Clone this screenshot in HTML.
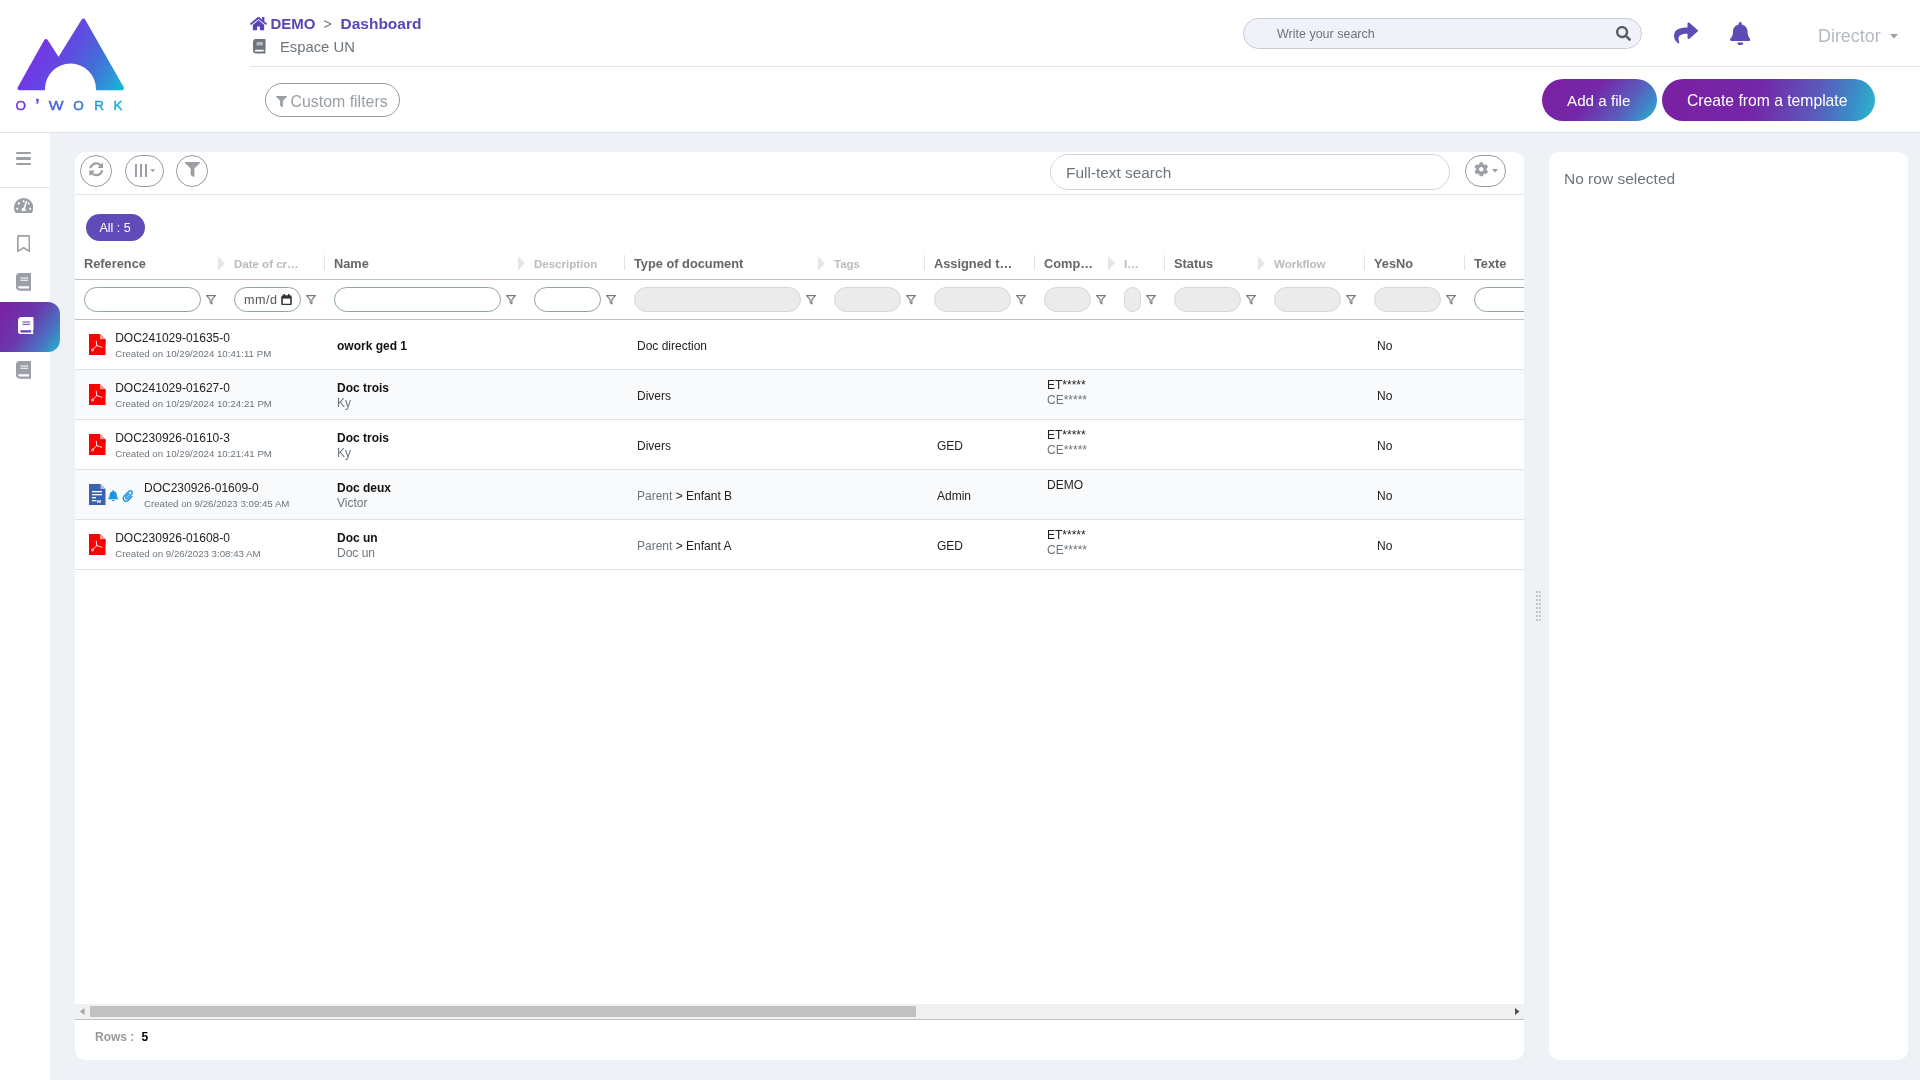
<!DOCTYPE html><html><head><meta charset="utf-8"><style>
html,body{margin:0;padding:0;}
body{width:1920px;height:1080px;overflow:hidden;position:relative;background:#eef1f6;font-family:"Liberation Sans", sans-serif;}
.t{position:absolute;white-space:nowrap;}
#root{position:absolute;left:0;top:0;width:1920px;height:1080px;will-change:transform;}
svg{display:block}
</style></head><body><div id="root">
<div style="position:absolute;left:0px;top:0px;width:1920px;height:132px;background:#fff"></div>
<div style="position:absolute;left:0px;top:132px;width:1920px;height:1px;background:#dfe3e8"></div>
<svg style="position:absolute;left:0;top:0" width="140" height="120" viewBox="0 0 140 120">
<defs><linearGradient id="lg" gradientUnits="userSpaceOnUse" x1="30" y1="35" x2="125" y2="92">
<stop offset="0" stop-color="#7d2ae8"/><stop offset="0.4" stop-color="#5f4de0"/><stop offset="0.65" stop-color="#4270d8"/><stop offset="0.85" stop-color="#2a9ad8"/><stop offset="1" stop-color="#05c4ce"/></linearGradient>
<linearGradient id="lg2" gradientUnits="userSpaceOnUse" x1="15" y1="0" x2="125" y2="0">
<stop offset="0" stop-color="#7a35e0"/><stop offset="0.5" stop-color="#3d6fd8"/><stop offset="1" stop-color="#18bcd0"/></linearGradient></defs>
<path d="M19.5 88.2 L46 41 L58.6 60.5 L83.4 20.5 L122 88.2 Z" fill="url(#lg)" stroke="url(#lg)" stroke-width="4" stroke-linejoin="round"/>
<path d="M45 91 L45 89 A25.5 25.5 0 0 1 96 89 L96 91 Z" fill="#fff"/>
<g font-family="Liberation Sans" font-weight="400" font-size="13.5" fill="url(#lg2)" stroke="url(#lg2)" stroke-width="0.45">
<text x="15.5" y="109.6">O</text><text x="35.2" y="109.1" font-weight="700" font-size="15">’</text><text x="48.8" y="109.6" textLength="14.8" lengthAdjust="spacingAndGlyphs">W</text><text x="73.2" y="109.6">O</text><text x="94.2" y="109.6">R</text><text x="113.6" y="109.6">K</text></g>
</svg>
<svg style="position:absolute;left:250px;top:16px;" width="17" height="15.1" viewBox="0 0 576 512"><path fill="#5b44b8" d="M280.37 148.26L96 300.11V464a16 16 0 0 0 16 16l112.06-.29a16 16 0 0 0 15.92-16V368a16 16 0 0 1 16-16h64a16 16 0 0 1 16 16v95.64a16 16 0 0 0 16 16.05L464 480a16 16 0 0 0 16-16V300L295.67 148.26a12.190 12.190 0 0 0-15.3 0zM571.6 251.47L488 182.56V44.05a12 12 0 0 0-12-12h-56a12 12 0 0 0-12 12v72.61L318.47 43a48 48 0 0 0-61 0L4.34 251.47a12 12 0 0 0-1.6 16.9l25.5 31A12 12 0 0 0 45.15 301l235.22-193.74a12.190 12.190 0 0 1 15.3 0L530.9 301a12 12 0 0 0 16.9-1.6l25.5-31a12 12 0 0 0-1.700-16.930z"/></svg>
<div class="t" style="left:270.5px;top:16.10px;font-size:15px;line-height:15px;color:#5b44b8;font-weight:700;">DEMO</div>
<div class="t" style="left:323.5px;top:16.65px;font-size:14px;line-height:14px;color:#6c757d;font-weight:400;">&gt;</div>
<div class="t" style="left:340.5px;top:15.68px;font-size:15.5px;line-height:15.5px;color:#5b44b8;font-weight:700;">Dashboard</div>
<svg style="position:absolute;left:253px;top:39.2px;" width="12.6" height="14.4" viewBox="0 0 448 512"><path fill="#6c757d" d="M448 360V24c0-13.3-10.7-24-24-24H96C43 0 0 43 0 96v320c0 53 43 96 96 96h328c13.3 0 24-10.7 24-24v-16c0-7.5-3.5-14.3-8.9-18.7-4.200-15.400-4.200-59.300 0-74.700 5.400-4.300 8.900-11.100 8.900-18.600zM128 134c0-3.300 2.700-6 6-6h212c3.300 0 6 2.700 6 6v20c0 3.300-2.700 6-6 6H134c-3.300 0-6-2.700-6-6v-20zm0 64c0-3.300 2.700-6 6-6h212c3.300 0 6 2.700 6 6v20c0 3.300-2.700 6-6 6H134c-3.300 0-6-2.700-6-6v-20zm253.400 250H96c-17.700 0-32-14.300-32-32 0-17.600 14.400-32 32-32h285.400c-1.900 17.100-1.900 46.900 0 64z"/></svg>
<div class="t" style="left:280.0px;top:39.87px;font-size:14.8px;line-height:14.8px;color:#6c757d;font-weight:400;">Espace UN</div>
<div style="position:absolute;left:250px;top:66px;width:1670px;height:1px;background:#dfe3e8"></div>
<div style="position:absolute;left:1243px;top:18px;width:397px;height:29px;background:#f1f1f9;border:1px solid #c9ced6;border-radius:16px"></div>
<div class="t" style="left:1277.0px;top:27.82px;font-size:12.5px;line-height:12.5px;color:#6c757d;font-weight:400;">Write your search</div>
<svg style="position:absolute;left:1616px;top:26px;" width="15" height="15" viewBox="0 0 512 512"><path fill="#555d66" d="M505 442.7L405.3 343c-4.5-4.5-10.6-7-17-7H372c27.6-35.3 44-79.7 44-128C416 93.1 322.9 0 208 0S0 93.1 0 208s93.1 208 208 208c48.3 0 92.7-16.4 128-44v16.3c0 6.4 2.5 12.5 7 17l99.7 99.7c9.4 9.4 24.6 9.4 33.9 0l28.3-28.3c9.4-9.4 9.4-24.6.1-34zM208 336c-70.7 0-128-57.2-128-128 0-70.7 57.2-128 128-128 70.7 0 128 57.2 128 128 0 70.7-57.2 128-128 128z"/></svg>
<svg style="position:absolute;left:1674px;top:21px;" width="24" height="24" viewBox="0 0 512 512"><path fill="#5b4db5" d="M503.691 189.836L327.687 37.851C312.281 24.546 288 35.347 288 56.015v80.053C127.371 137.907 0 170.1 0 322.326c0 61.441 39.581 122.309 83.333 154.132 13.653 9.931 33.111-2.533 28.077-18.631C66.066 312.814 132.917 274.316 288 272.085V360c0 20.7 24.3 31.453 39.687 18.164l176.004-152c11.071-9.562 11.086-26.753 0-36.328z"/></svg>
<svg style="position:absolute;left:1729.6px;top:21.5px;" width="20.5" height="23.5" viewBox="0 0 448 512"><path fill="#5b4db5" d="M224 512c35.32 0 63.970-28.650 63.970-64H160.030c0 35.350 28.650 64 63.970 64zm215.390-149.710c-19.320-20.760-55.470-51.990-55.470-154.290 0-77.700-54.480-139.900-127.940-155.160V32c0-17.670-14.320-32-31.980-32s-31.980 14.330-31.980 32v20.840C118.560 68.100 64.080 130.300 64.080 208c0 102.300-36.150 133.530-55.470 154.290-6 6.450-8.660 14.160-8.610 21.710.110 16.400 12.980 32 32.100 32h383.800c19.120 0 32-15.600 32.100-32 .050-7.550-2.610-15.270-8.610-21.710z"/></svg>
<div class="t" style="left:1818.0px;top:27.85px;font-size:17.9px;line-height:17.9px;color:#b4bac0;font-weight:400;">Director</div>
<svg style="position:absolute;left:1890px;top:34px;" width="8" height="5" viewBox="0 0 8 5"><path d="M0 0H8L4 4.5Z" fill="#9aa0a6"/></svg>
<div style="position:absolute;left:265px;top:83px;width:133px;height:32px;border:1px solid #9a9a9a;border-radius:17px"></div>
<svg style="position:absolute;left:276px;top:96px;" width="11" height="11" viewBox="0 0 512 512"><path fill="#9aa0a6" d="M487.976 0H24.028C2.710 0-8.047 25.866 7.058 40.971L192 225.941V432c0 7.831 3.821 15.170 10.237 19.662l80 55.980C298.020 518.690 320 507.493 320 487.980V225.941l184.947-184.970C520.021 25.896 509.338 0 487.976 0z"/></svg>
<div class="t" style="left:290.5px;top:93.54px;font-size:15.9px;line-height:15.9px;color:#9aa0a6;font-weight:400;">Custom filters</div>
<div style="position:absolute;left:1542px;top:79px;width:115px;height:42px;border-radius:21px;background:linear-gradient(128deg,#7b1fa2 0%,#7427a8 42%,#5a5bbb 70%,#3b8cc8 87%,#26bccc 100%)"></div>
<div class="t" style="left:1567.0px;top:93.13px;font-size:15.2px;line-height:15.2px;color:#fff;font-weight:400;">Add a file</div>
<div style="position:absolute;left:1662px;top:79px;width:213px;height:42px;border-radius:21px;background:linear-gradient(105deg,#7b1fa2 0%,#7427a8 45%,#5a5bbb 72%,#3b8cc8 88%,#26bccc 100%)"></div>
<div class="t" style="left:1687.0px;top:92.71px;font-size:15.7px;line-height:15.7px;color:#fff;font-weight:400;">Create from a template</div>
<div style="position:absolute;left:0px;top:133px;width:50px;height:947px;background:#fff"></div>
<div style="position:absolute;left:16.1px;top:151.9px;width:15.3px;height:2.2px;background:#9aa0a6;border-radius:1.1px"></div>
<div style="position:absolute;left:16.1px;top:157.4px;width:15.3px;height:2.2px;background:#9aa0a6;border-radius:1.1px"></div>
<div style="position:absolute;left:16.1px;top:162.8px;width:15.3px;height:2.2px;background:#9aa0a6;border-radius:1.1px"></div>
<div style="position:absolute;left:0px;top:187px;width:50px;height:1px;background:#dfe3e8"></div>
<svg style="position:absolute;left:14px;top:196.9px;" width="19.4" height="17.2" viewBox="0 0 576 512"><path fill="#9aa0a6" d="M288 32C128.94 32 0 160.94 0 320c0 52.8 14.25 102.26 39.06 144.8 5.61 9.62 16.3 15.2 27.44 15.2h443c11.14 0 21.83-5.58 27.44-15.2C561.75 422.26 576 372.8 576 320c0-159.06-128.94-288-288-288zm0 64c14.71 0 26.58 10.13 30.32 23.65-1.11 2.26-2.64 4.23-3.45 6.67l-9.22 27.67c-5.13 3.49-10.97 6.01-17.64 6.010-17.670 0-32-14.330-32-32S270.330 96 288 96zM96 384c-17.670 0-32-14.330-32-32s14.330-32 32-32 32 14.330 32 32-14.330 32-32 32zm48-160c-17.670 0-32-14.330-32-32s14.330-32 32-32 32 14.330 32 32-14.330 32-32 32zm246.770-72.410l-61.330 184C343.130 347.330 352 364.540 352 384c0 11.720-3.380 22.550-8.880 32H232.880c-5.500-9.450-8.880-20.280-8.880-32 0-33.940 26.500-61.430 59.900-63.590l61.340-184.010c4.170-12.560 17.730-19.450 30.360-15.170 12.570 4.190 19.350 17.790 15.170 30.360zm14.660 57.200l15.520-46.550c3.470-1.290 7.130-2.230 11.050-2.230 17.670 0 32 14.330 32 32s-14.330 32-32 32c-11.380-.010-20.890-6.270-26.570-15.220zM480 384c-17.670 0-32-14.330-32-32s14.330-32 32-32 32 14.330 32 32-14.330 32-32 32z"/></svg>
<svg style="position:absolute;left:17px;top:235.4px;" width="13.2" height="17.6" viewBox="0 0 384 512"><path fill="#9aa0a6" d="M336 0H48C21.49 0 0 21.49 0 48v464l192-112 192 112V48c0-26.51-21.49-48-48-48zm0 428.43l-144-84-144 84V54a6 6 0 0 1 6-6h276c3.314 0 6 2.683 6 5.996V428.43z"/></svg>
<svg style="position:absolute;left:15.8px;top:273.3px;" width="15.5" height="17.7" viewBox="0 0 448 512"><path fill="#9aa0a6" d="M448 360V24c0-13.3-10.7-24-24-24H96C43 0 0 43 0 96v320c0 53 43 96 96 96h328c13.3 0 24-10.7 24-24v-16c0-7.5-3.5-14.3-8.9-18.7-4.200-15.400-4.200-59.300 0-74.700 5.400-4.300 8.900-11.100 8.900-18.600zM128 134c0-3.300 2.700-6 6-6h212c3.300 0 6 2.700 6 6v20c0 3.300-2.700 6-6 6H134c-3.300 0-6-2.700-6-6v-20zm0 64c0-3.300 2.700-6 6-6h212c3.300 0 6 2.700 6 6v20c0 3.300-2.700 6-6 6H134c-3.300 0-6-2.700-6-6v-20zm253.400 250H96c-17.700 0-32-14.300-32-32 0-17.600 14.400-32 32-32h285.400c-1.900 17.100-1.900 46.900 0 64z"/></svg>
<div style="position:absolute;left:0px;top:302px;width:60px;height:50px;border-radius:0 12px 12px 0;background:linear-gradient(125deg,#7b1fa2 0%,#6b38ad 45%,#4a72c2 75%,#22b9cf 100%)"></div>
<svg style="position:absolute;left:18px;top:316.5px;" width="15.5" height="17.7" viewBox="0 0 448 512"><path fill="#fff" d="M448 360V24c0-13.3-10.7-24-24-24H96C43 0 0 43 0 96v320c0 53 43 96 96 96h328c13.3 0 24-10.7 24-24v-16c0-7.5-3.5-14.3-8.9-18.7-4.200-15.400-4.200-59.300 0-74.700 5.400-4.300 8.900-11.100 8.900-18.600zM128 134c0-3.300 2.700-6 6-6h212c3.300 0 6 2.700 6 6v20c0 3.300-2.700 6-6 6H134c-3.300 0-6-2.700-6-6v-20zm0 64c0-3.300 2.700-6 6-6h212c3.300 0 6 2.700 6 6v20c0 3.300-2.700 6-6 6H134c-3.300 0-6-2.700-6-6v-20zm253.400 250H96c-17.700 0-32-14.300-32-32 0-17.600 14.400-32 32-32h285.400c-1.900 17.100-1.900 46.900 0 64z"/></svg>
<svg style="position:absolute;left:15.8px;top:361.3px;" width="15.5" height="17.7" viewBox="0 0 448 512"><path fill="#9aa0a6" d="M448 360V24c0-13.3-10.7-24-24-24H96C43 0 0 43 0 96v320c0 53 43 96 96 96h328c13.3 0 24-10.7 24-24v-16c0-7.5-3.5-14.3-8.9-18.7-4.200-15.400-4.200-59.300 0-74.700 5.400-4.300 8.900-11.100 8.900-18.600zM128 134c0-3.300 2.700-6 6-6h212c3.300 0 6 2.700 6 6v20c0 3.300-2.700 6-6 6H134c-3.300 0-6-2.700-6-6v-20zm0 64c0-3.300 2.700-6 6-6h212c3.300 0 6 2.700 6 6v20c0 3.300-2.700 6-6 6H134c-3.300 0-6-2.700-6-6v-20zm253.400 250H96c-17.700 0-32-14.300-32-32 0-17.600 14.400-32 32-32h285.400c-1.900 17.100-1.900 46.900 0 64z"/></svg>
<div style="position:absolute;left:75px;top:152px;width:1449px;height:908px;background:#fff;border-radius:10px"></div>
<div style="position:absolute;left:1549px;top:152px;width:359px;height:908px;background:#fff;border-radius:10px"></div>
<div style="position:absolute;left:1536px;top:591px;width:2px;height:2px;background:#c4c4c4"></div>
<div style="position:absolute;left:1536px;top:595px;width:2px;height:2px;background:#c4c4c4"></div>
<div style="position:absolute;left:1536px;top:599px;width:2px;height:2px;background:#c4c4c4"></div>
<div style="position:absolute;left:1536px;top:603px;width:2px;height:2px;background:#c4c4c4"></div>
<div style="position:absolute;left:1536px;top:607px;width:2px;height:2px;background:#c4c4c4"></div>
<div style="position:absolute;left:1536px;top:611px;width:2px;height:2px;background:#c4c4c4"></div>
<div style="position:absolute;left:1536px;top:615px;width:2px;height:2px;background:#c4c4c4"></div>
<div style="position:absolute;left:1536px;top:619px;width:2px;height:2px;background:#c4c4c4"></div>
<div style="position:absolute;left:1539px;top:591px;width:2px;height:2px;background:#c4c4c4"></div>
<div style="position:absolute;left:1539px;top:595px;width:2px;height:2px;background:#c4c4c4"></div>
<div style="position:absolute;left:1539px;top:599px;width:2px;height:2px;background:#c4c4c4"></div>
<div style="position:absolute;left:1539px;top:603px;width:2px;height:2px;background:#c4c4c4"></div>
<div style="position:absolute;left:1539px;top:607px;width:2px;height:2px;background:#c4c4c4"></div>
<div style="position:absolute;left:1539px;top:611px;width:2px;height:2px;background:#c4c4c4"></div>
<div style="position:absolute;left:1539px;top:615px;width:2px;height:2px;background:#c4c4c4"></div>
<div style="position:absolute;left:1539px;top:619px;width:2px;height:2px;background:#c4c4c4"></div>
<div class="t" style="left:1564.0px;top:170.63px;font-size:15.5px;line-height:15.5px;color:#6c757d;font-weight:400;">No row selected</div>
<div style="position:absolute;left:80px;top:155px;width:30px;height:30px;border:1px solid #9a9a9a;border-radius:50%"></div>
<svg style="position:absolute;left:88.5px;top:162px;" width="14.5" height="14.5" viewBox="0 0 512 512"><path fill="#9aa0a6" d="M370.72 133.28C339.458 104.008 298.888 87.962 255.848 88c-77.458.068-144.328 53.178-162.791 126.85-1.344 5.363-6.122 9.15-11.651 9.15H24.103c-7.498 0-13.194-6.807-11.807-14.176C33.933 94.924 134.813 8 256 8c66.448 0 126.791 26.136 171.315 68.685L463.03 40.97C478.149 25.851 504 36.559 504 57.941V192c0 13.255-10.745 24-24 24H345.941c-21.382 0-32.09-25.851-16.971-40.971l41.75-41.749zM32 296h134.059c21.382 0 32.09 25.851 16.971 40.971l-41.75 41.75c31.262 29.273 71.835 45.319 114.876 45.28 77.418-.07 144.315-53.144 162.787-126.849 1.344-5.363 6.122-9.15 11.651-9.15h57.304c7.498 0 13.194 6.807 11.807 14.176C478.067 417.076 377.187 504 256 504c-66.448 0-126.791-26.136-171.315-68.685L48.97 471.03C33.851 486.149 8 475.441 8 454.059V320c0-13.255 10.745-24 24-24z"/></svg>
<div style="position:absolute;left:125px;top:155px;width:37px;height:30px;border:1px solid #9a9a9a;border-radius:16px"></div>
<div style="position:absolute;left:135px;top:164px;width:1.6px;height:13px;background:#9aa0a6"></div>
<div style="position:absolute;left:140px;top:164px;width:1.6px;height:13px;background:#9aa0a6"></div>
<div style="position:absolute;left:145px;top:164px;width:1.6px;height:13px;background:#9aa0a6"></div>
<svg style="position:absolute;left:149.5px;top:169.3px;" width="5.5" height="3" viewBox="0 0 6 3"><path d="M0 0H6L3 3Z" fill="#9aa0a6"/></svg>
<div style="position:absolute;left:176px;top:155px;width:30px;height:30px;border:1px solid #9a9a9a;border-radius:50%"></div>
<svg style="position:absolute;left:185.3px;top:162px;" width="15" height="15" viewBox="0 0 512 512"><path fill="#9aa0a6" d="M487.976 0H24.028C2.710 0-8.047 25.866 7.058 40.971L192 225.941V432c0 7.831 3.821 15.170 10.237 19.662l80 55.980C298.020 518.690 320 507.493 320 487.980V225.941l184.947-184.970C520.021 25.896 509.338 0 487.976 0z"/></svg>
<div style="position:absolute;left:1050px;top:154px;width:398px;height:34px;border:1px solid #ced4da;border-radius:18px"></div>
<div class="t" style="left:1066.0px;top:165.16px;font-size:15.4px;line-height:15.4px;color:#6c757d;font-weight:400;">Full-text search</div>
<div style="position:absolute;left:1465px;top:155px;width:39px;height:30px;border:1px solid #9a9a9a;border-radius:16px"></div>
<svg style="position:absolute;left:1474px;top:162px;" width="14.5" height="14.5" viewBox="0 0 512 512"><path fill="#9aa0a6" d="M487.4 315.7l-42.6-24.6c4.3-23.2 4.3-47 0-70.2l42.6-24.6c4.9-2.8 7.1-8.6 5.5-14-11.1-35.6-30-67.8-54.7-94.6-3.8-4.1-10-5.1-14.8-2.3L380.8 110c-17.9-15.4-38.5-27.3-60.8-35.1V25.8c0-5.6-3.9-10.5-9.4-11.7-36.7-8.2-74.3-7.8-109.2 0-5.5 1.2-9.4 6.1-9.4 11.7V75c-22.2 7.9-42.8 19.8-60.8 35.1L88.7 85.5c-4.9-2.8-11-1.9-14.8 2.3-24.7 26.7-43.6 58.9-54.7 94.6-1.7 5.4.6 11.2 5.5 14L67.3 221c-4.3 23.2-4.3 47 0 70.2l-42.6 24.6c-4.9 2.8-7.1 8.6-5.5 14 11.1 35.6 30 67.8 54.7 94.6 3.8 4.1 10 5.1 14.8 2.3l42.6-24.6c17.9 15.4 38.5 27.3 60.8 35.1v49.2c0 5.6 3.9 10.5 9.4 11.7 36.7 8.2 74.3 7.8 109.2 0 5.5-1.2 9.4-6.1 9.4-11.7v-49.2c22.2-7.9 42.8-19.8 60.8-35.1l42.6 24.6c4.9 2.8 11 1.9 14.8-2.3 24.7-26.7 43.6-58.9 54.7-94.6 1.5-5.5-.7-11.3-5.6-14.1zM256 336c-44.1 0-80-35.9-80-80s35.9-80 80-80 80 35.9 80 80-35.9 80-80 80z"/></svg>
<svg style="position:absolute;left:1492px;top:169px;" width="6" height="3.5" viewBox="0 0 6 3.5"><path d="M0 0H6L3 3.5Z" fill="#9aa0a6"/></svg>
<div style="position:absolute;left:75px;top:194px;width:1449px;height:1px;background:#e6e6e6"></div>
<div style="position:absolute;left:86px;top:214px;width:59px;height:27px;background:#604bb9;border-radius:14px"></div>
<div class="t" style="left:99.5px;top:221.62px;font-size:12.5px;line-height:12.5px;color:#fff;font-weight:400;">All : 5</div>
<div style="position:absolute;left:75px;top:240px;width:1449px;height:764px;overflow:hidden">
<div class="t" style="left:9.0px;top:18.16px;font-size:12.8px;line-height:12.8px;color:#666666;font-weight:700;">Reference</div>
<div style="position:absolute;left:9px;top:47px;width:115px;height:23px;border:1px solid #8fa5a8;border-radius:13px;background:#fff"></div>
<svg style="position:absolute;left:130.5px;top:55px;" width="10" height="9.5" viewBox="0 0 10 9.5"><path d="M0.6 0.6H9.4L5.9 4.6V8.9L4.1 7.6V4.6Z" fill="none" stroke="#777" stroke-width="1.1" stroke-linejoin="round"/></svg>
<div class="t" style="left:159.0px;top:18.57px;font-size:11.5px;line-height:11.5px;color:#bbbbbb;font-weight:700;">Date of cr…</div>
<svg style="position:absolute;left:143px;top:15.800000000000011px;" width="7" height="14.7" viewBox="0 0 7 14.7"><path d="M0 0L7 7.35L0 14.7Z" fill="#e6e6e6"/></svg>
<div style="position:absolute;left:159px;top:47px;width:65px;height:23px;border:1px solid #8fa5a8;border-radius:13px;background:#fff"></div>
<svg style="position:absolute;left:230.5px;top:55px;" width="10" height="9.5" viewBox="0 0 10 9.5"><path d="M0.6 0.6H9.4L5.9 4.6V8.9L4.1 7.6V4.6Z" fill="none" stroke="#777" stroke-width="1.1" stroke-linejoin="round"/></svg>
<div class="t" style="left:259.0px;top:18.16px;font-size:12.8px;line-height:12.8px;color:#666666;font-weight:700;">Name</div>
<div style="position:absolute;left:249px;top:15px;width:1px;height:15px;background:#e3e3e3"></div>
<div style="position:absolute;left:259px;top:47px;width:165px;height:23px;border:1px solid #8fa5a8;border-radius:13px;background:#fff"></div>
<svg style="position:absolute;left:430.5px;top:55px;" width="10" height="9.5" viewBox="0 0 10 9.5"><path d="M0.6 0.6H9.4L5.9 4.6V8.9L4.1 7.6V4.6Z" fill="none" stroke="#777" stroke-width="1.1" stroke-linejoin="round"/></svg>
<div class="t" style="left:459.0px;top:18.57px;font-size:11.5px;line-height:11.5px;color:#bbbbbb;font-weight:700;">Description</div>
<svg style="position:absolute;left:443px;top:15.800000000000011px;" width="7" height="14.7" viewBox="0 0 7 14.7"><path d="M0 0L7 7.35L0 14.7Z" fill="#e6e6e6"/></svg>
<div style="position:absolute;left:459px;top:47px;width:65px;height:23px;border:1px solid #8fa5a8;border-radius:13px;background:#fff"></div>
<svg style="position:absolute;left:530.5px;top:55px;" width="10" height="9.5" viewBox="0 0 10 9.5"><path d="M0.6 0.6H9.4L5.9 4.6V8.9L4.1 7.6V4.6Z" fill="none" stroke="#777" stroke-width="1.1" stroke-linejoin="round"/></svg>
<div class="t" style="left:559.0px;top:18.16px;font-size:12.8px;line-height:12.8px;color:#666666;font-weight:700;">Type of document</div>
<div style="position:absolute;left:549px;top:15px;width:1px;height:15px;background:#e3e3e3"></div>
<div style="position:absolute;left:559px;top:47px;width:165px;height:23px;border:1px solid #d6d6d6;border-radius:13px;background:#ebebeb"></div>
<svg style="position:absolute;left:730.5px;top:55px;" width="10" height="9.5" viewBox="0 0 10 9.5"><path d="M0.6 0.6H9.4L5.9 4.6V8.9L4.1 7.6V4.6Z" fill="none" stroke="#777" stroke-width="1.1" stroke-linejoin="round"/></svg>
<div class="t" style="left:759.0px;top:18.57px;font-size:11.5px;line-height:11.5px;color:#bbbbbb;font-weight:700;">Tags</div>
<svg style="position:absolute;left:743px;top:15.800000000000011px;" width="7" height="14.7" viewBox="0 0 7 14.7"><path d="M0 0L7 7.35L0 14.7Z" fill="#e6e6e6"/></svg>
<div style="position:absolute;left:759px;top:47px;width:65px;height:23px;border:1px solid #d6d6d6;border-radius:13px;background:#ebebeb"></div>
<svg style="position:absolute;left:830.5px;top:55px;" width="10" height="9.5" viewBox="0 0 10 9.5"><path d="M0.6 0.6H9.4L5.9 4.6V8.9L4.1 7.6V4.6Z" fill="none" stroke="#777" stroke-width="1.1" stroke-linejoin="round"/></svg>
<div class="t" style="left:859.0px;top:18.16px;font-size:12.8px;line-height:12.8px;color:#666666;font-weight:700;">Assigned t…</div>
<div style="position:absolute;left:849px;top:15px;width:1px;height:15px;background:#e3e3e3"></div>
<div style="position:absolute;left:859px;top:47px;width:75px;height:23px;border:1px solid #d6d6d6;border-radius:13px;background:#ebebeb"></div>
<svg style="position:absolute;left:940.5px;top:55px;" width="10" height="9.5" viewBox="0 0 10 9.5"><path d="M0.6 0.6H9.4L5.9 4.6V8.9L4.1 7.6V4.6Z" fill="none" stroke="#777" stroke-width="1.1" stroke-linejoin="round"/></svg>
<div class="t" style="left:969.0px;top:18.16px;font-size:12.8px;line-height:12.8px;color:#666666;font-weight:700;">Comp…</div>
<div style="position:absolute;left:959px;top:15px;width:1px;height:15px;background:#e3e3e3"></div>
<div style="position:absolute;left:969px;top:47px;width:45px;height:23px;border:1px solid #d6d6d6;border-radius:13px;background:#ebebeb"></div>
<svg style="position:absolute;left:1020.5px;top:55px;" width="10" height="9.5" viewBox="0 0 10 9.5"><path d="M0.6 0.6H9.4L5.9 4.6V8.9L4.1 7.6V4.6Z" fill="none" stroke="#777" stroke-width="1.1" stroke-linejoin="round"/></svg>
<div class="t" style="left:1049.0px;top:18.57px;font-size:11.5px;line-height:11.5px;color:#bbbbbb;font-weight:700;">I…</div>
<svg style="position:absolute;left:1033px;top:15.800000000000011px;" width="7" height="14.7" viewBox="0 0 7 14.7"><path d="M0 0L7 7.35L0 14.7Z" fill="#e6e6e6"/></svg>
<div style="position:absolute;left:1049px;top:47px;width:15px;height:23px;border:1px solid #d6d6d6;border-radius:13px;background:#ebebeb"></div>
<svg style="position:absolute;left:1070.5px;top:55px;" width="10" height="9.5" viewBox="0 0 10 9.5"><path d="M0.6 0.6H9.4L5.9 4.6V8.9L4.1 7.6V4.6Z" fill="none" stroke="#777" stroke-width="1.1" stroke-linejoin="round"/></svg>
<div class="t" style="left:1099.0px;top:18.16px;font-size:12.8px;line-height:12.8px;color:#666666;font-weight:700;">Status</div>
<div style="position:absolute;left:1089px;top:15px;width:1px;height:15px;background:#e3e3e3"></div>
<div style="position:absolute;left:1099px;top:47px;width:65px;height:23px;border:1px solid #d6d6d6;border-radius:13px;background:#ebebeb"></div>
<svg style="position:absolute;left:1170.5px;top:55px;" width="10" height="9.5" viewBox="0 0 10 9.5"><path d="M0.6 0.6H9.4L5.9 4.6V8.9L4.1 7.6V4.6Z" fill="none" stroke="#777" stroke-width="1.1" stroke-linejoin="round"/></svg>
<div class="t" style="left:1199.0px;top:18.57px;font-size:11.5px;line-height:11.5px;color:#bbbbbb;font-weight:700;">Workflow</div>
<svg style="position:absolute;left:1183px;top:15.800000000000011px;" width="7" height="14.7" viewBox="0 0 7 14.7"><path d="M0 0L7 7.35L0 14.7Z" fill="#e6e6e6"/></svg>
<div style="position:absolute;left:1199px;top:47px;width:65px;height:23px;border:1px solid #d6d6d6;border-radius:13px;background:#ebebeb"></div>
<svg style="position:absolute;left:1270.5px;top:55px;" width="10" height="9.5" viewBox="0 0 10 9.5"><path d="M0.6 0.6H9.4L5.9 4.6V8.9L4.1 7.6V4.6Z" fill="none" stroke="#777" stroke-width="1.1" stroke-linejoin="round"/></svg>
<div class="t" style="left:1299.0px;top:18.16px;font-size:12.8px;line-height:12.8px;color:#666666;font-weight:700;">YesNo</div>
<div style="position:absolute;left:1289px;top:15px;width:1px;height:15px;background:#e3e3e3"></div>
<div style="position:absolute;left:1299px;top:47px;width:65px;height:23px;border:1px solid #d6d6d6;border-radius:13px;background:#ebebeb"></div>
<svg style="position:absolute;left:1370.5px;top:55px;" width="10" height="9.5" viewBox="0 0 10 9.5"><path d="M0.6 0.6H9.4L5.9 4.6V8.9L4.1 7.6V4.6Z" fill="none" stroke="#777" stroke-width="1.1" stroke-linejoin="round"/></svg>
<div class="t" style="left:1399.0px;top:18.16px;font-size:12.8px;line-height:12.8px;color:#666666;font-weight:700;">Texte</div>
<div style="position:absolute;left:1389px;top:15px;width:1px;height:15px;background:#e3e3e3"></div>
<div style="position:absolute;left:1399px;top:47px;width:100px;height:23px;border:1px solid #8fa5a8;border-radius:13px;background:#fff"></div>
<div style="position:absolute;left:0px;top:39px;width:1449px;height:1px;background:#b8c3c8"></div>
<div style="position:absolute;left:0px;top:79px;width:1449px;height:1px;background:#b8c3c8"></div>
<div class="t" style="left:169.0px;top:53.53px;font-size:12.6px;line-height:12.6px;color:#555;font-weight:400;letter-spacing:0.5px">mm/d</div>
<svg style="position:absolute;left:206px;top:53.5px;" width="11" height="11.5" viewBox="0 0 11 11.5"><rect x="1" y="2" width="9" height="8.5" rx="1" fill="none" stroke="#333" stroke-width="1.6"/><rect x="1" y="2" width="9" height="2.6" fill="#333"/><rect x="2.5" y="0" width="1.5" height="3" fill="#333"/><rect x="7" y="0" width="1.5" height="3" fill="#333"/></svg>
<div style="position:absolute;left:0px;top:129px;width:1449px;height:1px;background:#dee2e6"></div>
<svg style="position:absolute;left:14.299999999999997px;top:94px;" width="16.5" height="21" viewBox="0 0 16.5 21"><defs><linearGradient id="pf" x1="0" y1="0" x2="1" y2="1"><stop offset="0" stop-color="#c00000"/><stop offset="1" stop-color="#ff0000"/></linearGradient></defs><path d="M0 0H11L16.5 5.5V21H0Z" fill="#ff0000"/><path d="M11 0L16.5 5.5H11Z" fill="#ff9a9a"/><path d="M11 5.5H16.5V11Z" fill="url(#pf)"/><path d="M7.3 7.2L7.7 11.6M7.7 11.6L3.2 16.4M7.7 11.6L12.8 13.2" fill="none" stroke="#fff" stroke-width="0.9" stroke-linecap="round"/><circle cx="3.6" cy="16" r="1.1" fill="none" stroke="#fff" stroke-width="0.7"/></svg>
<div class="t" style="left:40.2px;top:91.64px;font-size:12px;line-height:12px;color:#222;font-weight:400;">DOC241029-01635-0</div>
<div class="t" style="left:40.2px;top:108.69px;font-size:9.7px;line-height:9.7px;color:#6c757d;font-weight:400;">Created on 10/29/2024 10:41:11 PM</div>
<div class="t" style="left:262.0px;top:99.84px;font-size:12px;line-height:12px;color:#111;font-weight:700;">owork ged 1</div>
<div class="t" style="left:562.0px;top:99.84px;font-size:12px;line-height:12px;color:#222;font-weight:400;">Doc direction</div>
<div class="t" style="left:1302.0px;top:99.84px;font-size:12px;line-height:12px;color:#222;font-weight:400;">No</div>
<div style="position:absolute;left:0px;top:130px;width:1449px;height:49px;background:#f9fafc"></div>
<div style="position:absolute;left:0px;top:179px;width:1449px;height:1px;background:#dee2e6"></div>
<svg style="position:absolute;left:14.299999999999997px;top:144px;" width="16.5" height="21" viewBox="0 0 16.5 21"><defs><linearGradient id="pf" x1="0" y1="0" x2="1" y2="1"><stop offset="0" stop-color="#c00000"/><stop offset="1" stop-color="#ff0000"/></linearGradient></defs><path d="M0 0H11L16.5 5.5V21H0Z" fill="#ff0000"/><path d="M11 0L16.5 5.5H11Z" fill="#ff9a9a"/><path d="M11 5.5H16.5V11Z" fill="url(#pf)"/><path d="M7.3 7.2L7.7 11.6M7.7 11.6L3.2 16.4M7.7 11.6L12.8 13.2" fill="none" stroke="#fff" stroke-width="0.9" stroke-linecap="round"/><circle cx="3.6" cy="16" r="1.1" fill="none" stroke="#fff" stroke-width="0.7"/></svg>
<div class="t" style="left:40.2px;top:141.64px;font-size:12px;line-height:12px;color:#222;font-weight:400;">DOC241029-01627-0</div>
<div class="t" style="left:40.2px;top:158.69px;font-size:9.7px;line-height:9.7px;color:#6c757d;font-weight:400;">Created on 10/29/2024 10:24:21 PM</div>
<div class="t" style="left:262.0px;top:141.54px;font-size:12px;line-height:12px;color:#111;font-weight:700;">Doc trois</div>
<div class="t" style="left:262.0px;top:156.84px;font-size:12px;line-height:12px;color:#6c757d;font-weight:400;">Ky</div>
<div class="t" style="left:562.0px;top:149.84px;font-size:12px;line-height:12px;color:#222;font-weight:400;">Divers</div>
<div class="t" style="left:972.0px;top:138.74px;font-size:12px;line-height:12px;color:#222;font-weight:400;">ET*****</div>
<div class="t" style="left:972.0px;top:153.59px;font-size:12px;line-height:12px;color:#6c757d;font-weight:400;">CE*****</div>
<div class="t" style="left:1302.0px;top:149.84px;font-size:12px;line-height:12px;color:#222;font-weight:400;">No</div>
<div style="position:absolute;left:0px;top:229px;width:1449px;height:1px;background:#dee2e6"></div>
<svg style="position:absolute;left:14.299999999999997px;top:194px;" width="16.5" height="21" viewBox="0 0 16.5 21"><defs><linearGradient id="pf" x1="0" y1="0" x2="1" y2="1"><stop offset="0" stop-color="#c00000"/><stop offset="1" stop-color="#ff0000"/></linearGradient></defs><path d="M0 0H11L16.5 5.5V21H0Z" fill="#ff0000"/><path d="M11 0L16.5 5.5H11Z" fill="#ff9a9a"/><path d="M11 5.5H16.5V11Z" fill="url(#pf)"/><path d="M7.3 7.2L7.7 11.6M7.7 11.6L3.2 16.4M7.7 11.6L12.8 13.2" fill="none" stroke="#fff" stroke-width="0.9" stroke-linecap="round"/><circle cx="3.6" cy="16" r="1.1" fill="none" stroke="#fff" stroke-width="0.7"/></svg>
<div class="t" style="left:40.2px;top:191.64px;font-size:12px;line-height:12px;color:#222;font-weight:400;">DOC230926-01610-3</div>
<div class="t" style="left:40.2px;top:208.69px;font-size:9.7px;line-height:9.7px;color:#6c757d;font-weight:400;">Created on 10/29/2024 10:21:41 PM</div>
<div class="t" style="left:262.0px;top:191.54px;font-size:12px;line-height:12px;color:#111;font-weight:700;">Doc trois</div>
<div class="t" style="left:262.0px;top:206.84px;font-size:12px;line-height:12px;color:#6c757d;font-weight:400;">Ky</div>
<div class="t" style="left:562.0px;top:199.84px;font-size:12px;line-height:12px;color:#222;font-weight:400;">Divers</div>
<div class="t" style="left:862.0px;top:199.84px;font-size:12px;line-height:12px;color:#222;font-weight:400;">GED</div>
<div class="t" style="left:972.0px;top:188.74px;font-size:12px;line-height:12px;color:#222;font-weight:400;">ET*****</div>
<div class="t" style="left:972.0px;top:203.59px;font-size:12px;line-height:12px;color:#6c757d;font-weight:400;">CE*****</div>
<div class="t" style="left:1302.0px;top:199.84px;font-size:12px;line-height:12px;color:#222;font-weight:400;">No</div>
<div style="position:absolute;left:0px;top:230px;width:1449px;height:49px;background:#f9fafc"></div>
<div style="position:absolute;left:0px;top:279px;width:1449px;height:1px;background:#dee2e6"></div>
<svg style="position:absolute;left:14.400000000000006px;top:243.70000000000005px;" width="16.5" height="21" viewBox="0 0 16.5 21"><path d="M0 0H11.5L16.5 5V21H0Z" fill="#3b62b0"/><path d="M11.5 0L16.5 5H11.5Z" fill="#a9bde3"/><rect x="3" y="7" width="10" height="1.3" fill="#fff"/><rect x="3" y="10" width="10" height="1.3" fill="#fff"/><rect x="3" y="13" width="4" height="1.3" fill="#fff"/><rect x="3" y="16" width="4" height="1.3" fill="#fff"/><text x="7.5" y="18.5" font-size="6" font-family="Liberation Sans" font-weight="700" fill="#fff">w</text></svg>
<svg style="position:absolute;left:33px;top:249.5px;" width="10.5" height="11.5" viewBox="0 0 448 512"><path fill="#1b95e0" d="M224 512c35.32 0 63.970-28.650 63.970-64H160.030c0 35.350 28.650 64 63.970 64zm215.390-149.710c-19.320-20.760-55.470-51.990-55.470-154.290 0-77.700-54.480-139.900-127.940-155.160V32c0-17.670-14.320-32-31.980-32s-31.980 14.330-31.980 32v20.840C118.560 68.100 64.080 130.300 64.080 208c0 102.300-36.150 133.530-55.470 154.290-6 6.450-8.660 14.160-8.610 21.710.110 16.400 12.980 32 32.100 32h383.800c19.120 0 32-15.600 32.100-32 .050-7.550-2.610-15.270-8.610-21.710z"/></svg>
<svg style="position:absolute;left:47px;top:249.5px;" width="11.5" height="12" viewBox="0 0 448 512"><path fill="#1b95e0" d="M43.246 466.142c-58.43-60.289-57.341-157.511 1.386-217.581L254.392 34c44.316-45.332 116.351-45.336 160.671 0 43.89 44.894 43.943 117.329 0 162.276L232.214 383.128c-29.855 30.537-78.633 30.111-107.982-.998-28.275-29.97-27.368-77.473 1.452-106.953l143.743-146.835c6.182-6.314 16.312-6.422 22.626-.241l22.861 22.379c6.315 6.182 6.422 16.312.241 22.626L171.427 319.927c-4.932 5.045-5.236 13.428-.648 18.292 4.372 4.634 11.245 4.711 15.688.165l182.849-186.851c19.613-20.062 19.613-52.725-.011-72.798-19.189-19.627-49.957-19.637-69.154 0L90.39 293.295c-34.763 35.56-35.299 93.12-1.191 128.313 34.01 35.093 88.985 35.137 123.058.286l172.06-175.999c6.177-6.319 16.307-6.433 22.626-.256l22.877 22.364c6.319 6.177 6.434 16.307.256 22.626l-172.06 175.998c-59.576 60.938-155.943 60.216-214.77-.485z"/></svg>
<div class="t" style="left:69.0px;top:241.64px;font-size:12px;line-height:12px;color:#222;font-weight:400;">DOC230926-01609-0</div>
<div class="t" style="left:69.0px;top:258.69px;font-size:9.7px;line-height:9.7px;color:#6c757d;font-weight:400;">Created on 9/26/2023 3:09:45 AM</div>
<div class="t" style="left:262.0px;top:241.54px;font-size:12px;line-height:12px;color:#111;font-weight:700;">Doc deux</div>
<div class="t" style="left:262.0px;top:256.84px;font-size:12px;line-height:12px;color:#6c757d;font-weight:400;">Victor</div>
<div class="t" style="left:562.0px;top:249.84px;font-size:12px;line-height:12px;color:#222;font-weight:400;"><span style="color:#6c757d">Parent</span> &gt; Enfant B</div>
<div class="t" style="left:862.0px;top:249.84px;font-size:12px;line-height:12px;color:#222;font-weight:400;">Admin</div>
<div class="t" style="left:972.0px;top:238.84px;font-size:12px;line-height:12px;color:#222;font-weight:400;">DEMO</div>
<div class="t" style="left:1302.0px;top:249.84px;font-size:12px;line-height:12px;color:#222;font-weight:400;">No</div>
<div style="position:absolute;left:0px;top:329px;width:1449px;height:1px;background:#dee2e6"></div>
<svg style="position:absolute;left:14.299999999999997px;top:294px;" width="16.5" height="21" viewBox="0 0 16.5 21"><defs><linearGradient id="pf" x1="0" y1="0" x2="1" y2="1"><stop offset="0" stop-color="#c00000"/><stop offset="1" stop-color="#ff0000"/></linearGradient></defs><path d="M0 0H11L16.5 5.5V21H0Z" fill="#ff0000"/><path d="M11 0L16.5 5.5H11Z" fill="#ff9a9a"/><path d="M11 5.5H16.5V11Z" fill="url(#pf)"/><path d="M7.3 7.2L7.7 11.6M7.7 11.6L3.2 16.4M7.7 11.6L12.8 13.2" fill="none" stroke="#fff" stroke-width="0.9" stroke-linecap="round"/><circle cx="3.6" cy="16" r="1.1" fill="none" stroke="#fff" stroke-width="0.7"/></svg>
<div class="t" style="left:40.2px;top:291.64px;font-size:12px;line-height:12px;color:#222;font-weight:400;">DOC230926-01608-0</div>
<div class="t" style="left:40.2px;top:308.69px;font-size:9.7px;line-height:9.7px;color:#6c757d;font-weight:400;">Created on 9/26/2023 3:08:43 AM</div>
<div class="t" style="left:262.0px;top:291.54px;font-size:12px;line-height:12px;color:#111;font-weight:700;">Doc un</div>
<div class="t" style="left:262.0px;top:306.84px;font-size:12px;line-height:12px;color:#6c757d;font-weight:400;">Doc un</div>
<div class="t" style="left:562.0px;top:299.84px;font-size:12px;line-height:12px;color:#222;font-weight:400;"><span style="color:#6c757d">Parent</span> &gt; Enfant A</div>
<div class="t" style="left:862.0px;top:299.84px;font-size:12px;line-height:12px;color:#222;font-weight:400;">GED</div>
<div class="t" style="left:972.0px;top:288.74px;font-size:12px;line-height:12px;color:#222;font-weight:400;">ET*****</div>
<div class="t" style="left:972.0px;top:303.59px;font-size:12px;line-height:12px;color:#6c757d;font-weight:400;">CE*****</div>
<div class="t" style="left:1302.0px;top:299.84px;font-size:12px;line-height:12px;color:#222;font-weight:400;">No</div>
</div>
<div style="position:absolute;left:75px;top:1004px;width:1449px;height:15px;background:#f1f1f1"></div>
<div style="position:absolute;left:75px;top:1019px;width:1449px;height:1px;background:#b8c3c8"></div>
<svg style="position:absolute;left:80px;top:1008px;" width="4.5" height="7" viewBox="0 0 4.5 7"><path d="M4.5 0V7L0 3.5Z" fill="#a3a3a3"/></svg>
<div style="position:absolute;left:90px;top:1006px;width:826px;height:11px;background:#c1c1c1"></div>
<svg style="position:absolute;left:1515px;top:1008px;" width="4.5" height="7" viewBox="0 0 4.5 7"><path d="M0 0V7L4.5 3.5Z" fill="#505050"/></svg>
<div class="t" style="left:95.0px;top:1030.64px;font-size:12px;line-height:12px;color:#999;font-weight:700;">Rows :</div>
<div class="t" style="left:141.5px;top:1030.64px;font-size:12px;line-height:12px;color:#000;font-weight:700;">5</div>
</div></body></html>
